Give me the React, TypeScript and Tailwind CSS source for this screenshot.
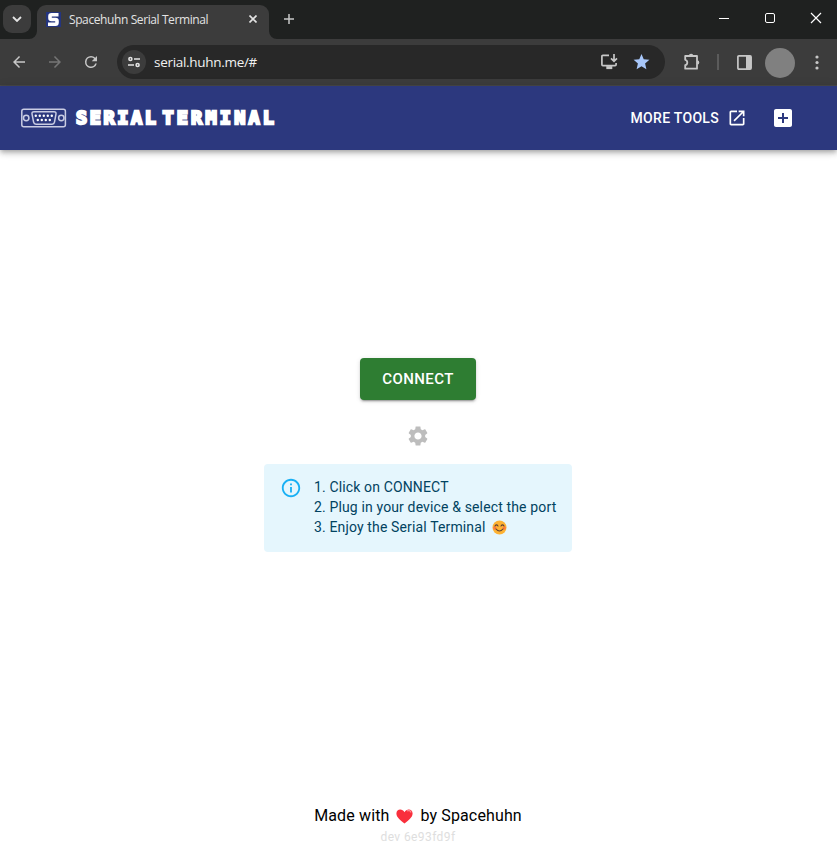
import React from 'react';

type IconProps = { d: string; className?: string };

function Icon({ d, className }: IconProps) {
  return (
    <svg viewBox="0 0 24 24" fill="currentColor" className={`shrink-0 ${className ?? ''}`}>
      <path d={d} />
    </svg>
  );
}

const ARROW = 'M20 11H7.83l5.59-5.59L12 4l-8 8 8 8 1.41-1.41L7.83 13H20v-2z';
const REFRESH =
  'M17.65 6.35A7.958 7.958 0 0 0 12 4a8 8 0 1 0 7.73 10h-2.08A6 6 0 1 1 12 6c1.66 0 3.14.69 4.22 1.78L13 11h7V4l-2.35 2.35z';
const STAR = 'M12 17.27 18.18 21l-1.64-7.03L22 9.24l-7.19-.61L12 2 9.19 8.63 2 9.24l5.46 4.73L5.82 21z';
const OPEN_NEW =
  'M19 19H5V5h7V3H5c-1.11 0-2 .9-2 2v14c0 1.1.89 2 2 2h14c1.1 0 2-.9 2-2v-7h-2v7zM14 3v2h3.59l-9.83 9.83 1.41 1.41L19 6.41V10h2V3h-7z';
const ADD_BOX = 'M19 3H5c-1.11 0-2 .9-2 2v14c0 1.1.89 2 2 2h14c1.1 0 2-.9 2-2V5c0-1.1-.9-2-2-2zm-2 10h-4v4h-2v-4H7v-2h4V7h2v4h4v2z';
const GEAR =
  'M19.14 12.94c.04-.3.06-.61.06-.94 0-.32-.02-.64-.07-.94l2.03-1.58c.18-.14.23-.41.12-.61l-1.92-3.32c-.12-.22-.37-.29-.59-.22l-2.39.96c-.5-.38-1.03-.7-1.62-.94l-.36-2.54c-.04-.24-.24-.41-.48-.41h-3.84c-.24 0-.43.17-.47.41l-.36 2.54c-.59.24-1.13.57-1.62.94l-2.39-.96c-.22-.08-.47 0-.59.22L2.74 8.87c-.12.21-.08.47.12.61l2.03 1.58c-.05.3-.09.63-.09.94s.02.64.07.94l-2.03 1.58c-.18.14-.23.41-.12.61l1.92 3.32c.12.22.37.29.59.22l2.39-.96c.5.38 1.03.7 1.62.94l.36 2.54c.05.24.24.41.48.41h3.84c.24 0 .44-.17.47-.41l.36-2.54c.59-.24 1.13-.56 1.62-.94l2.39.96c.22.08.47 0 .59-.22l1.92-3.32c.12-.22.07-.47-.12-.61l-2.01-1.58zM12 15.6c-1.98 0-3.6-1.62-3.6-3.6s1.62-3.6 3.6-3.6 3.6 1.62 3.6 3.6-1.62 3.6-3.6 3.6z';
const INFO =
  'M11 7h2v2h-2zm0 4h2v6h-2zm1-9C6.48 2 2 6.48 2 12s4.48 10 10 10 10-4.48 10-10S17.52 2 12 2zm0 18c-4.41 0-8-3.59-8-8s3.59-8 8-8 8 3.59 8 8-3.59 8-8 8z';

function TabStrip() {
  return (
    <div className="flex h-[39px] bg-[#1f2120] text-[#e3e3e3]">
      <div className="ml-[3px] mt-[5px] flex h-7 w-7 items-center justify-center rounded-[9px] bg-[#3c3c3c]">
        <svg width="10" height="6" viewBox="0 0 10 6" fill="none" stroke="currentColor" strokeWidth="1.8">
          <path d="M1 1l4 4 4-4" />
        </svg>
      </div>
      <svg width="8" height="39" className="ml-[-2px] shrink-0">
        <path d="M8 31v8H0a8 8 0 0 0 8-8z" fill="#3c3c3c" />
      </svg>
      <div className="mt-[5px] flex h-[34px] w-[232px] rounded-t-[9px] bg-[#3c3c3c]">
        <div className="ml-[9px] mt-[7px] flex h-[15px] w-[15px] items-center justify-center bg-[#24357f]">
          <svg width="13" height="15" viewBox="0 0 13 15" fill="none" stroke="#fff" strokeWidth="3.6">
            <path d="M11.5 2.8H4.5Q3 2.8 3 4.3v1.7Q3 7.5 4.5 7.5h4Q10 7.5 10 9v1.5Q10 12.2 8.5 12.2H1" />
          </svg>
        </div>
        <span className="ml-[8px] mt-[7px] w-[180px] whitespace-nowrap font-['Open_Sans','Noto_Sans',sans-serif] text-[12px] leading-4 tracking-[-0.4px]">
          Spacehuhn Serial Terminal
        </span>
        <svg width="8" height="8" viewBox="0 0 8 8" className="mr-[10px] mt-[10px] shrink-0" stroke="currentColor" strokeWidth="1.6">
          <path d="M.5.5l7 7M7.5.5l-7 7" />
        </svg>
      </div>
      <svg width="8" height="39" className="shrink-0">
        <path d="M0 31v8h8a8 8 0 0 1-8-8z" fill="#3c3c3c" />
      </svg>
      <svg width="10" height="10" viewBox="0 0 10 10" className="ml-[7px] mt-[14px] shrink-0" stroke="#c7c7c7" strokeWidth="1.5">
        <path d="M5 0v10M0 5h10" />
      </svg>
      <svg width="104" height="12" viewBox="0 0 104 12" className="ml-auto mr-[15px] mt-[12px] shrink-0" fill="none" stroke="#fff">
        <path d="M1 6.5h10" />
        <rect x="47.5" y="1.5" width="9" height="9" rx="1.5" />
        <path d="M93 1l10 10M103 1l-10 10" strokeWidth="1.2" />
      </svg>
    </div>
  );
}

function Toolbar() {
  return (
    <div className="flex h-[47px] items-center border-b border-[#484848] bg-[#3c3c3c] text-[#c7c7c7]">
      <Icon d={ARROW} className="ml-[10px] h-[18px] w-[18px]" />
      <Icon d={ARROW} className="ml-[18px] h-[18px] w-[18px] rotate-180 text-[#757575]" />
      <Icon d={REFRESH} className="ml-[18px] h-[18px] w-[18px]" />
      <div className="ml-[17px] flex h-[34px] w-[548px] items-center rounded-full bg-[#282828]">
        <div className="ml-[5px] flex h-6 w-6 items-center justify-center rounded-full bg-[#3c3c3c]">
          <svg width="12" height="12" viewBox="0 0 12 12" fill="none" stroke="#e3e3e3" strokeWidth="1.6">
            <circle cx="2.4" cy="3" r="1.5" />
            <path d="M6 3h6M0 9h6" />
            <circle cx="9.6" cy="9" r="1.5" />
          </svg>
        </div>
        <span className="ml-[8px] font-['Open_Sans','Noto_Sans',sans-serif] text-[13.5px] leading-5 tracking-[-0.3px] text-[#f1f1f1]">
          serial.huhn.me/#
        </span>
        <svg width="18" height="16" viewBox="0 0 18 16" className="ml-auto" fill="none" stroke="currentColor" strokeWidth="1.7">
          <path d="M9 1.4H2.9Q1.9 1.4 1.9 2.4v8.2q0 1 1 1h12.2q1 0 1-1V9M14 0v7M11 4.3l3 3 3-3" />
          <path d="M6.3 13.6h6" strokeWidth="3" />
        </svg>
        <Icon d={STAR} className="ml-[14px] mr-[14px] h-[20px] w-[19px] text-[#a8c7fa]" />
      </div>
      <svg width="18" height="18" viewBox="0 0 18 18" className="ml-[18px] shrink-0" fill="none" stroke="currentColor" strokeWidth="1.8">
        <path d="M2.2 3H14v12.7H2.2v-3.5Q4.3 11.8 4.3 9.5T2.2 6.8z" strokeLinejoin="round" />
        <path d="M6.2 3a1.8 2 0 0 1 3.6 0zM14.2 7.6a2 1.9 0 0 1 0 3.8z" fill="currentColor" stroke="none" />
        <path d="M6.5 2.4q1.6-1.8 3.2 0M14.6 7.9q1.8 1.6 0 3.2" strokeWidth="1.4" />
      </svg>
      <div className="ml-[16px] h-4 w-[2px] bg-[#5b5b5b]" />
      <svg width="15" height="15" viewBox="0 0 15 15" className="ml-[18px] shrink-0">
        <rect x=".9" y=".9" width="13.2" height="13.2" rx="1" fill="none" stroke="currentColor" strokeWidth="1.7" />
        <path d="M9 1h5v13H9z" fill="currentColor" />
      </svg>
      <div className="ml-[13px] mt-[2px] h-[30px] w-[30px] rounded-full bg-[#808080]" />
      <svg width="4" height="15" viewBox="0 0 4 15" fill="currentColor" className="ml-[20px] shrink-0">
        <circle cx="2" cy="2" r="1.6" />
        <circle cx="2" cy="7.5" r="1.6" />
        <circle cx="2" cy="13" r="1.6" />
      </svg>
    </div>
  );
}

function PortLogo() {
  return (
    <svg width="46" height="20" viewBox="0 0 46 20" fill="none" stroke="#c9cce3" strokeWidth="1.5" className="ml-[21px]">
      <rect x=".8" y="1.2" width="43.6" height="17.6" rx="2" />
      <circle cx="5.2" cy="10" r="2.7" />
      <circle cx="40.3" cy="10" r="2.7" />
      <path d="M13 3.7h20q2.3 0 2 2.3l-1.5 8.2q-.4 2-2.4 2H15q-2 0-2.4-2L11 6q-.3-2.3 2-2.3z" />
      <g fill="#fff" stroke="none">
        {[14.8, 18.8, 22.8, 26.8, 30.8].map((x) => (
          <circle key={x} cx={x} cy="7.7" r="1.2" />
        ))}
        {[16.8, 20.8, 24.8, 28.8].map((x) => (
          <circle key={x} cx={x} cy="12" r="1.2" />
        ))}
      </g>
    </svg>
  );
}

function Smile() {
  return (
    <svg width="15" height="15" viewBox="0 0 15 15" className="ml-[6px]">
      <circle cx="7.5" cy="7.5" r="7" fill="#fdb233" />
      <circle cx="2.8" cy="8" r="1.7" fill="#ff7b3d" />
      <circle cx="12.2" cy="8" r="1.7" fill="#ff7b3d" />
      <path d="M3 6Q4.5 3.7 6 6M9 6q1.5-2.3 3 0M4 9q3.5 4 7 0" fill="none" stroke="#5d4037" strokeWidth="1.1" strokeLinecap="round" />
    </svg>
  );
}

export default function App() {
  return (
    <div className="flex h-[844px] w-[837px] flex-col overflow-hidden bg-white font-['Roboto',sans-serif]">
      <TabStrip />
      <Toolbar />
      <header className="flex h-16 shrink-0 items-center bg-[#2c387e] text-white shadow-[0_2px_4px_-1px_rgba(0,0,0,0.2),0_4px_5px_0_rgba(0,0,0,0.14),0_1px_10px_0_rgba(0,0,0,0.12)]">
        <PortLogo />
        <h1 className="ml-[9px] flex gap-[4px] whitespace-nowrap font-['DejaVu_Sans_Mono',monospace] text-[18.5px] font-bold leading-6 [-webkit-text-stroke:2.3px_white]">
          <span className="tracking-[2.6px]">SERIAL</span>
          <span className="tracking-[3.2px]">TERMINAL</span>
        </h1>
        <div className="ml-auto flex items-center">
          <span className="text-[14px] font-medium leading-6 tracking-[0.3px]">MORE TOOLS</span>
          <Icon d={OPEN_NEW} className="ml-[8px] h-5 w-5" />
          <Icon d={ADD_BOX} className="ml-[24px] mr-[42px] h-6 w-6" />
        </div>
      </header>
      <main className="flex flex-1 flex-col items-center pt-[208px]">
        <button className="mr-px h-[42px] w-[116px] rounded-[4px] bg-[#2e7d32] text-[15px] font-medium tracking-[0.43px] text-white shadow-[0_3px_1px_-2px_rgba(0,0,0,0.2),0_2px_2px_0_rgba(0,0,0,0.14),0_1px_5px_0_rgba(0,0,0,0.12)]">
          CONNECT
        </button>
        <Icon d={GEAR} className="mr-px mt-[24px] h-6 w-6 text-[#bdbdbd]" />
        <section className="mr-px mt-[16px] flex h-[88px] w-[308px] rounded-[4px] bg-[#e5f6fd] text-[#014361]">
          <Icon d={INFO} className="ml-[16px] mt-[13px] h-[22px] w-[22px] text-[#03a9f4] opacity-90" />
          <ol className="ml-[12px] mt-[13px] whitespace-nowrap text-[14px] leading-5 tracking-[0.14px]">
            <li>1. Click on CONNECT</li>
            <li>2. Plug in your device &amp; select the port</li>
            <li className="flex items-center">
              3. Enjoy the Serial Terminal
              <Smile />
            </li>
          </ol>
        </section>
      </main>
      <footer className="mr-px flex h-[40px] shrink-0 flex-col items-center">
        <p className="flex items-center text-[16px] leading-6 tracking-[0.13px] text-black">
          Made with
          <svg width="17" height="15" viewBox="0 0 17 15" className="mx-[7px]">
            <path d="M8.5 14.5C4 11 .4 8.2.4 4.5.4-.3 6.5-.8 8.5 3.3 10.5-.8 16.6-.3 16.6 4.5c0 3.7-3.6 6.5-8.1 10z" fill="#f92f3c" />
            <path d="M11 2q3-1.5 4 1.5" fill="none" stroke="#ff8790" strokeWidth="1.3" />
          </svg>
          by Spacehuhn
        </p>
        <p className="text-[12px] leading-[18px] tracking-[0.4px] text-[#dedede]">dev 6e93fd9f</p>
      </footer>
    </div>
  );
}
